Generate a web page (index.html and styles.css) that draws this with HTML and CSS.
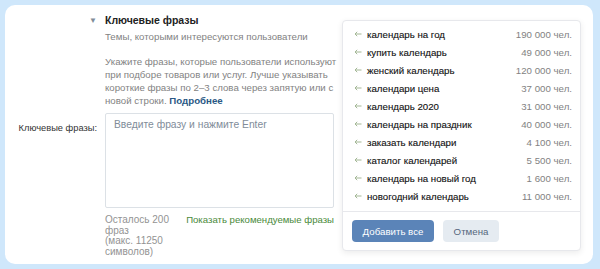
FILE: index.html
```html
<!DOCTYPE html>
<html lang="ru">
<head>
<meta charset="utf-8">
<link rel="stylesheet" href="styles.css">
</head>
<body>
<div class="card">
  <div class="grid">
    <div class="lab tri">▼</div>
    <div class="title">Ключевые фразы</div>

    <div></div>
    <div class="sub">Темы, которыми интересуются пользователи</div>

    <div></div>
    <div class="desc">Укажите фразы, которые пользователи используют<br>при подборе товаров или услуг. Лучше указывать<br>короткие фразы по 2–3 слова через запятую или с<br>новой строки. <a class="more">Подробнее</a></div>

    <div class="lab field-lab">Ключевые фразы:</div>
    <div class="textarea">Введите фразу и нажмите Enter</div>

    <div></div>
    <div class="foot">
      <div class="left">Осталось 200<br>фраз<br>(макс. 11250<br>символов)</div>
      <div class="show">Показать рекомендуемые фразы</div>
    </div>
  </div>

  <div class="popup">
    <ul class="list">
      <li><svg class="arr" viewBox="0 0 8 6"><path d="M7.5 3H1M3.2 0.8 1 3l2.2 2.2"/></svg><span class="ph">календарь на год</span><span class="cnt">190 000 чел.</span></li>
      <li><svg class="arr" viewBox="0 0 8 6"><path d="M7.5 3H1M3.2 0.8 1 3l2.2 2.2"/></svg><span class="ph">купить календарь</span><span class="cnt">49 000 чел.</span></li>
      <li><svg class="arr" viewBox="0 0 8 6"><path d="M7.5 3H1M3.2 0.8 1 3l2.2 2.2"/></svg><span class="ph">женский календарь</span><span class="cnt">120 000 чел.</span></li>
      <li><svg class="arr" viewBox="0 0 8 6"><path d="M7.5 3H1M3.2 0.8 1 3l2.2 2.2"/></svg><span class="ph">календари цена</span><span class="cnt">37 000 чел.</span></li>
      <li><svg class="arr" viewBox="0 0 8 6"><path d="M7.5 3H1M3.2 0.8 1 3l2.2 2.2"/></svg><span class="ph">календарь 2020</span><span class="cnt">31 000 чел.</span></li>
      <li><svg class="arr" viewBox="0 0 8 6"><path d="M7.5 3H1M3.2 0.8 1 3l2.2 2.2"/></svg><span class="ph">календарь на праздник</span><span class="cnt">40 000 чел.</span></li>
      <li><svg class="arr" viewBox="0 0 8 6"><path d="M7.5 3H1M3.2 0.8 1 3l2.2 2.2"/></svg><span class="ph">заказать календари</span><span class="cnt">4 100 чел.</span></li>
      <li><svg class="arr" viewBox="0 0 8 6"><path d="M7.5 3H1M3.2 0.8 1 3l2.2 2.2"/></svg><span class="ph">каталог календарей</span><span class="cnt">5 500 чел.</span></li>
      <li><svg class="arr" viewBox="0 0 8 6"><path d="M7.5 3H1M3.2 0.8 1 3l2.2 2.2"/></svg><span class="ph">календарь на новый год</span><span class="cnt">1 600 чел.</span></li>
      <li><svg class="arr" viewBox="0 0 8 6"><path d="M7.5 3H1M3.2 0.8 1 3l2.2 2.2"/></svg><span class="ph">новогодний календарь</span><span class="cnt">11 000 чел.</span></li>
    </ul>
    <div class="btns">
      <button class="btn primary">Добавить все</button>
      <button class="btn secondary">Отмена</button>
    </div>
  </div>
</div>
</body>
</html>
```

FILE: styles.css
```css
* { box-sizing: border-box; }
html, body { margin: 0; }
body {
  background: #cfe7fb;
  padding: 5px 7px 5px 5px;
  font-family: "Liberation Sans", Arial, sans-serif;
  width: 600px;
  height: 269px;
  overflow: hidden;
}
.card {
  position: relative;
  background: #fff;
  border-radius: 10px;
  height: 259px;
  padding-top: 8px;
}
.grid {
  display: grid;
  grid-template-columns: 92px 229px;
  column-gap: 8px;
  align-items: start;
}
.lab {
  text-align: right;
  color: #222;
  white-space: nowrap;
}
.tri {
  font-size: 8px;
  color: #818c99;
  line-height: 15px;
}
.title {
  font-size: 10.5px;
  font-weight: bold;
  color: #222;
  line-height: 15px;
}
.sub {
  font-size: 9.7px;
  color: #828282;
  line-height: 13px;
  margin-top: 2px;
  white-space: nowrap;
}
.desc {
  font-size: 9.7px;
  color: #828282;
  line-height: 13px;
  margin-top: 12px;
  white-space: nowrap;
}
.more { color: #2a5885; font-weight: bold; }
.field-lab {
  margin-top: 12px;
  line-height: 13px;
  padding-top: 3px;
  color: #333;
  font-size: 9.3px;
}
.textarea {
  margin-top: 6px;
  height: 95px;
  border: 1px solid #dce1e6;
  border-radius: 2px;
  padding: 4px 8px;
  font-size: 10.3px;
  color: #818c99;
  line-height: 13px;
}
.foot {
  display: flex;
  justify-content: space-between;
  margin-top: 7px;
  font-size: 10px;
  line-height: 10.5px;
}
.left { color: #939393; white-space: nowrap; }
.show { color: #4a8a3a; white-space: nowrap; font-size: 9.6px; }
.popup {
  position: absolute;
  left: 337px;
  top: 15px;
  width: 239px;
  height: 231px;
  background: #fff;
  border: 1px solid #e7e8ec;
  border-radius: 4px;
  box-shadow: 0 2px 6px rgba(0,0,0,0.08);
}
.list {
  list-style: none;
  margin: 0;
  padding: 4px 0 6px;
  border-bottom: 1px solid #e7e8ec;
}
.list li {
  display: flex;
  align-items: center;
  height: 18px;
  padding: 0 8px 0 11px;
}
.arr {
  width: 8px;
  height: 6px;
  margin-right: 5px;
  fill: none;
  stroke: #a3b795;
  stroke-width: 1;
}
.ph {
  color: #111;
  flex: 1;
  font-size: 9.7px;
  -webkit-text-stroke: 0.12px #111;
}
.cnt { color: #828282; font-size: 9.7px; }
.btns {
  display: flex;
  gap: 9px;
  padding: 8px 9px 0;
}
.btn {
  height: 22px;
  border: none;
  border-radius: 4px;
  font-family: inherit;
  font-size: 9.7px;
  padding: 0;
}
.primary { background: #5b84b8; color: #fff; width: 82px; }
.secondary { background: #e5ebf1; color: #55677d; width: 56px; }
```
